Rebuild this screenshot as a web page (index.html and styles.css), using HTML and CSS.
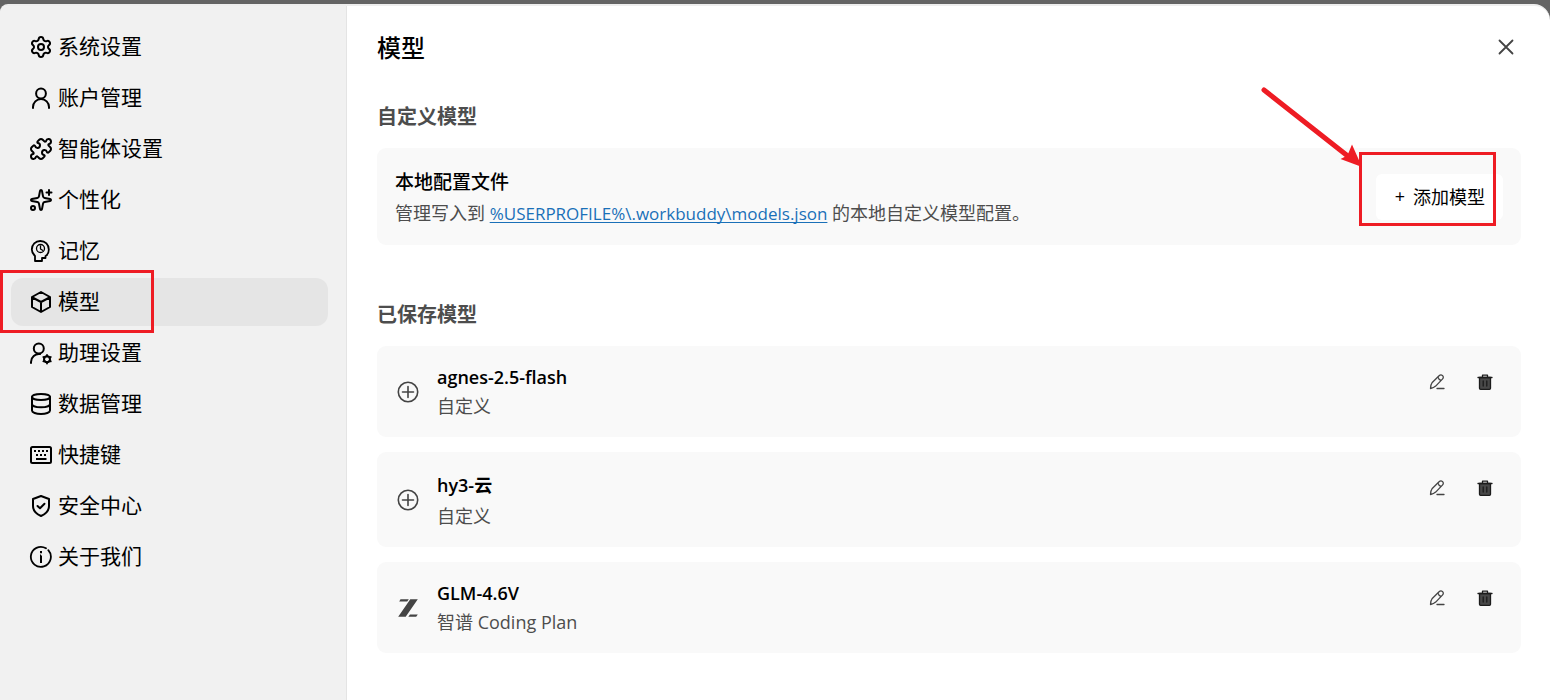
FILE: index.html
```html
<!DOCTYPE html>
<html lang="zh-CN">
<head>
  <meta charset="UTF-8" />
  <meta name="viewport" content="width=device-width, initial-scale=1.0" />
  <title>模型</title>
  <link rel="stylesheet" href="styles.css">
</head>
<body>
  <div class="dialog">
    <nav class="sidebar">
      <a class="nav-item" href="#system">
        <svg class="icon" viewBox="0 0 24 24"><path d="M9.671 4.136a2.34 2.34 0 0 1 4.659 0 2.34 2.34 0 0 0 3.319 1.915 2.34 2.34 0 0 1 2.33 4.033 2.34 2.34 0 0 0 0 3.831 2.34 2.34 0 0 1-2.33 4.033 2.34 2.34 0 0 0-3.319 1.915 2.34 2.34 0 0 1-4.659 0 2.34 2.34 0 0 0-3.32-1.915 2.34 2.34 0 0 1-2.33-4.033 2.34 2.34 0 0 0 0-3.831A2.34 2.34 0 0 1 6.35 6.051a2.34 2.34 0 0 0 3.319-1.915"/><circle cx="12" cy="12" r="3"/></svg>
        <span>系统设置</span>
      </a>
      <a class="nav-item" href="#account">
        <svg class="icon" viewBox="0 0 24 24"><circle cx="12" cy="7.5" r="4.9"/><path d="M4 22v-1a8 8 0 0 1 16 0v1"/></svg>
        <span>账户管理</span>
      </a>
      <a class="nav-item" href="#agent">
        <svg class="icon" viewBox="0 0 24 24"><path d="M15.39 4.39a1 1 0 0 0 1.68-.474 2.5 2.5 0 1 1 3.014 3.015 1 1 0 0 0-.474 1.68l1.683 1.682a2.414 2.414 0 0 1 0 3.414L19.61 15.39a1 1 0 0 1-1.68-.474 2.5 2.5 0 1 0-3.014 3.015 1 1 0 0 1 .474 1.68l-1.683 1.682a2.414 2.414 0 0 1-3.414 0L8.61 19.61a1 1 0 0 0-1.68.474 2.5 2.5 0 1 1-3.014-3.015 1 1 0 0 0 .474-1.68l-1.683-1.682a2.414 2.414 0 0 1 0-3.414L4.39 8.61a1 1 0 0 1 1.68.474 2.5 2.5 0 1 0 3.014-3.015 1 1 0 0 1-.474-1.68l1.683-1.682a2.414 2.414 0 0 1 3.414 0z"/></svg>
        <span>智能体设置</span>
      </a>
      <a class="nav-item" href="#personal">
        <svg class="icon" viewBox="0 0 24 24"><path d="M11.017 2.814a1 1 0 0 1 1.966 0l1.051 5.558a2 2 0 0 0 1.594 1.594l5.558 1.051a1 1 0 0 1 0 1.966l-5.558 1.051a2 2 0 0 0-1.594 1.594l-1.051 5.558a1 1 0 0 1-1.966 0l-1.051-5.558a2 2 0 0 0-1.594-1.594l-5.558-1.051a1 1 0 0 1 0-1.966l5.558-1.051a2 2 0 0 0 1.594-1.594z"/><path d="M20 2v5M22.500 4.500h-5"/><circle cx="4" cy="20" r="2"/></svg>
        <span>个性化</span>
      </a>
      <a class="nav-item" href="#memory">
        <svg class="icon" viewBox="0 0 24 24"><path stroke-width="1.800" d="M6 22v-5c-2-2-3.200-4-3.200-6.500A8.400 8.400 0 0 1 11.300 2c5 0 8.500 3.800 8.500 8.500 0 3-1.300 5.500-3.300 6.500v2H13v3z"/><g stroke-width="1.300"><circle cx="11.500" cy="9.500" r="4"/><path d="M11.500 7v3l2 1.300"/></g></svg>
        <span>记忆</span>
      </a>
      <a class="nav-item active" href="#model">
        <svg class="icon" viewBox="0 0 24 24"><path d="M12 2l9 5v10l-9 5-9-5V7zM3.500 7.500L12 12l8.500-4.500M12 12v9.500"/></svg>
        <span>模型</span>
        <i class="mark mark-nav"></i>
      </a>
      <a class="nav-item" href="#assistant">
        <svg class="icon" viewBox="0 0 24 24"><circle cx="9.800" cy="7.500" r="5"/><path d="M2 22v-1a8 8 0 0 1 9-7.900"/><circle cx="18" cy="18.200" r="3"/><path stroke-width="1.800" d="M18 14v1.500M18 21v1.500M14.300 16l1.300.800M20.400 19.600l1.400.800M14.300 20.400l1.300-.8M20.400 16.800l1.400-.8"/></svg>
        <span>助理设置</span>
      </a>
      <a class="nav-item" href="#data">
        <svg class="icon" viewBox="0 0 24 24"><ellipse cx="12" cy="5" rx="9" ry="3"/><path d="M3 5v13.500C3 20.500 7 22 12 22s9-1.500 9-3.500V5M3 12c0 2 4 3.300 9 3.300s9-1.300 9-3.300"/></svg>
        <span>数据管理</span>
      </a>
      <a class="nav-item" href="#keys">
        <svg class="icon" viewBox="0 0 24 24"><rect x="2" y="4" width="20" height="16" rx="1.500"/><path stroke-width="1.800" stroke-linecap="butt" d="M5 8h2M9 8h2M13 8h2M17 8h2M7 12h2M11 12h2M15 12h2M7 16h10.500"/></svg>
        <span>快捷键</span>
      </a>
      <a class="nav-item" href="#security">
        <svg class="icon" viewBox="0 0 24 24"><path d="M12 2l8 3v7c0 5-3.500 8-8 10-4.500-2-8-5-8-10V5z"/><path d="M8.500 12l2.500 2.300 4.500-4.600"/></svg>
        <span>安全中心</span>
      </a>
      <a class="nav-item" href="#about">
        <svg class="icon" viewBox="0 0 24 24"><path stroke-width="1.800" d="M19.300 5.200a10 10 0 1 1-2.300-1.900"/><path stroke-linecap="butt" d="M12 10.500v7.500M11 10.500h1M12 6v2.200"/></svg>
        <span>关于我们</span>
      </a>
    </nav>

    <main class="content">
      <header class="content-head">
        <h1>模型</h1>
        <button class="close" type="button" aria-label="关闭">
          <svg viewBox="0 0 16 16"><path d="M1.500 1.500l13 13M14.500 1.500l-13 13"/></svg>
        </button>
      </header>

      <section>
        <h2>自定义模型</h2>
        <div class="card config">
          <div class="config-text">
            <h3>本地配置文件</h3>
            <p>管理写入到 <a href="#models-json">%USERPROFILE%\.workbuddy\models.json</a> 的本地自定义模型配置。</p>
          </div>
          <div class="add-wrap">
            <button class="add" type="button"><span class="plus">+</span>添加模型</button>
            <i class="mark mark-add"></i>
            <svg class="arrow" viewBox="0 0 104 84"><path class="shaft" d="M4 4l85 67"/><path class="tip" d="M102 81L92 58.500l-4 9.500-1.500 2-6 3z"/></svg>
          </div>
        </div>
      </section>

      <section class="saved">
        <h2>已保存模型</h2>
        <ul class="models">
          <li class="card model">
            <svg class="logo" viewBox="0 0 22 22"><circle cx="11" cy="11" r="9.700"/><path d="M11 5.500v11M5.500 11h11"/></svg>
            <div class="model-text">
              <h3>agnes-2.5-flash</h3>
              <p>自定义</p>
            </div>
            <div class="actions">
              <button type="button" aria-label="编辑"><svg class="edit" viewBox="0 0 16 16"><path d="M1.500 14.500c0-2.500.5-4.500 1.500-5.700L9.800 2c1.300-1.300 2.500-1.500 3.600-.6 1.200 1 1.200 2.400 0 3.700l-6.700 7c-1.500 1.400-3 2-5.200 2.400zM9 3.200c.4 1.700 1.300 2.700 3 3.200M8 14.500h7"/></svg></button>
              <button type="button" aria-label="删除"><svg class="trash" viewBox="0 0 16 16"><path class="bin" d="M2.500 3.500h11v10.800a1 1 0 0 1-1 1h-9a1 1 0 0 1-1-1z"/><path d="M1 3.500h14M5.500 3V1.200h5V3M6.200 7v5M9.800 7v5"/></svg></button>
            </div>
          </li>
          <li class="card model">
            <svg class="logo" viewBox="0 0 22 22"><circle cx="11" cy="11" r="9.700"/><path d="M11 5.500v11M5.500 11h11"/></svg>
            <div class="model-text tall">
              <h3>hy3-云</h3>
              <p>自定义</p>
            </div>
            <div class="actions">
              <button type="button" aria-label="编辑"><svg class="edit" viewBox="0 0 16 16"><path d="M1.500 14.500c0-2.500.5-4.500 1.500-5.700L9.800 2c1.300-1.300 2.500-1.500 3.600-.6 1.200 1 1.200 2.400 0 3.700l-6.700 7c-1.500 1.400-3 2-5.200 2.400zM9 3.200c.4 1.700 1.300 2.700 3 3.200M8 14.500h7"/></svg></button>
              <button type="button" aria-label="删除"><svg class="trash" viewBox="0 0 16 16"><path class="bin" d="M2.500 3.500h11v10.800a1 1 0 0 1-1 1h-9a1 1 0 0 1-1-1z"/><path d="M1 3.500h14M5.500 3V1.200h5V3M6.200 7v5M9.800 7v5"/></svg></button>
            </div>
          </li>
          <li class="card model">
            <svg class="logo solid" viewBox="0 0 22 22"><path d="M3.500 2.200h8.300l-1.600 2.300H2.200zM13.300 2.200h7.500L8.700 19.800H1.200zM13 17.500h7.800l-1.600 2.300h-7.900z"/></svg>
            <div class="model-text">
              <h3>GLM-4.6V</h3>
              <p>智谱 Coding Plan</p>
            </div>
            <div class="actions">
              <button type="button" aria-label="编辑"><svg class="edit" viewBox="0 0 16 16"><path d="M1.500 14.500c0-2.500.5-4.500 1.500-5.700L9.800 2c1.300-1.300 2.500-1.500 3.600-.6 1.200 1 1.200 2.400 0 3.700l-6.700 7c-1.500 1.400-3 2-5.200 2.400zM9 3.200c.4 1.700 1.300 2.700 3 3.200M8 14.500h7"/></svg></button>
              <button type="button" aria-label="删除"><svg class="trash" viewBox="0 0 16 16"><path class="bin" d="M2.500 3.500h11v10.800a1 1 0 0 1-1 1h-9a1 1 0 0 1-1-1z"/><path d="M1 3.500h14M5.500 3V1.200h5V3M6.200 7v5M9.800 7v5"/></svg></button>
            </div>
          </li>
        </ul>
      </section>
    </main>
  </div>
</body>
</html>
```

FILE: styles.css
```css
* {
  box-sizing: border-box;
}
body {
  margin: 0;
  padding-top: 4px;
  min-height: 100vh;
  display: flex;
  background: #646464;
  color: #000;
  font-family: 'Open Sans', 'Noto Sans CJK SC', sans-serif;
  font-size: 18px;
}
h1, h2, h3, p, ul {
  margin: 0;
  padding: 0;
}
button {
  font: inherit;
  border: none;
  cursor: pointer;
}
svg {
  fill: none;
  stroke: currentColor;
  stroke-linecap: round;
  stroke-linejoin: round;
}
.dialog {
  flex: 1;
  display: flex;
  background: #fff;
  border-top: 2px solid #eee;
  border-radius: 8px 16px 0 0;
  overflow: hidden;
}

/* sidebar */
.sidebar {
  flex: 0 0 347px;
  display: flex;
  flex-direction: column;
  gap: 3px;
  padding: 17px 18px 17px 11px;
  background: #f1f1f1;
  border-right: 1px solid #e4e4e4;
}
.nav-item {
  position: relative;
  display: flex;
  align-items: center;
  gap: 5px;
  height: 48px;
  padding: 0 18px;
  border-radius: 12px;
  color: #000;
  font-size: 21px;
  line-height: 30px;
  text-decoration: none;
}
.nav-item span {
  padding-bottom: 2px;
}
.nav-item.active {
  background: #e5e5e5;
}
.icon {
  width: 24px;
  height: 24px;
  stroke-width: 2;
}

/* content */
.content {
  flex: 1;
  min-width: 0;
  padding: 24px 29px 24px 30px;
}
.content-head {
  display: flex;
  align-items: flex-start;
  justify-content: space-between;
}
h1 {
  font-size: 24px;
  font-weight: 500;
  line-height: 36px;
}
.close {
  display: flex;
  padding: 9px 7px;
  background: none;
  color: #444;
}
.close svg {
  width: 16px;
  height: 16px;
  stroke-width: 1.8;
}
h2 {
  margin: 36px 0 16px;
  color: #4d4d4d;
  font-size: 20px;
  font-weight: 700;
  line-height: 30px;
}
.card {
  display: flex;
  border-radius: 9px;
  background: #f9f9f9;
}
h3 {
  font-size: 19px;
  font-weight: 500;
  line-height: 27px;
}
.card p {
  color: #4d4d4d;
  line-height: 26px;
}
.config {
  align-items: center;
  justify-content: space-between;
  padding: 18px;
}
.config h3 {
  margin: 3px 0 4px;
}
.config a {
  color: #1a70b8;
  font-size: 17px;
  text-decoration-skip-ink: none;
  text-underline-offset: 2px;
}
.add-wrap {
  position: relative;
}
.add {
  display: flex;
  align-items: center;
  gap: 8px;
  height: 46px;
  padding: 0 18px 2px 19px;
  border-radius: 6px;
  background: #fff;
  color: #000;
  white-space: nowrap;
}

/* saved models */
.saved h2 {
  margin-top: 55px;
}
.models {
  display: flex;
  flex-direction: column;
  gap: 15px;
  list-style: none;
}
.model {
  align-items: center;
  gap: 18px;
  padding: 18px 20px;
}
.logo {
  width: 22px;
  height: 22px;
  color: #444;
  stroke-width: 1.6;
}
.logo.solid {
  fill: currentColor;
  stroke: none;
}
.model-text {
  flex: 1;
}
.model-text h3 {
  font-size: 18px;
  font-weight: 600;
}
.model-text p {
  margin-top: 2px;
}
.model-text.tall h3 {
  line-height: 31px;
}
.actions {
  display: flex;
  align-self: flex-start;
  gap: 16px;
}
.actions button {
  display: flex;
  padding: 10px 8px;
  background: none;
  color: #444;
}
.actions svg {
  width: 16px;
  height: 16px;
  stroke-width: 1.3;
}
.actions .trash {
  color: #1c1c1c;
}
.trash .bin {
  fill: #484848;
}

/* red callouts */
.mark {
  position: absolute;
  border: 3px solid #ee1c24;
  pointer-events: none;
}
.mark-nav {
  top: -8px;
  left: -11px;
  width: 154px;
  height: 63px;
}
.mark-add {
  top: -22px;
  left: -17px;
  width: 137px;
  height: 74px;
}
.arrow {
  position: absolute;
  top: -88px;
  left: -116px;
  width: 104px;
  height: 84px;
  color: #ee1c24;
  pointer-events: none;
}
.arrow .shaft {
  stroke-width: 5;
}
.arrow .tip {
  fill: currentColor;
  stroke: none;
}
```
